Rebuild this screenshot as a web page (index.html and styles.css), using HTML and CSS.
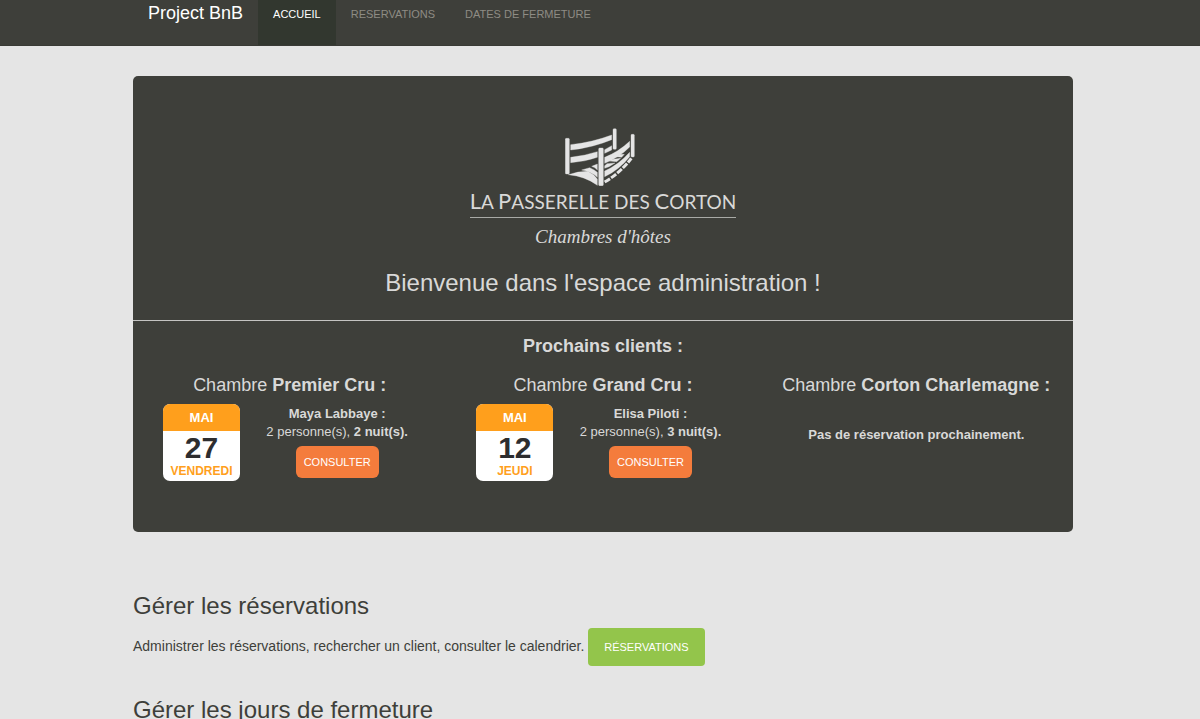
FILE: index.html
```html
<!DOCTYPE html>
<html lang="fr">
<head>
<meta charset="utf-8">
<title>Project BnB</title>
<link rel="stylesheet" href="styles.css">
</head>
<body>
<header class="navbar">
  <nav class="container nav">
    <a class="brand" href="#">Project BnB</a>
    <a class="nav-link active" href="#">ACCUEIL</a>
    <a class="nav-link" href="#">RESERVATIONS</a>
    <a class="nav-link" href="#">DATES DE FERMETURE</a>
  </nav>
</header>
<main class="container">
  <section class="hero">
    <div class="logo">
      <svg class="bridge" viewBox="30 18 228 174" aria-hidden="true">
        <rect x="31" y="49" width="12" height="107" rx="3"/>
        <rect x="174" y="20" width="10" height="62" rx="3"/>
        <rect x="228" y="37" width="10" height="68" rx="3"/>
        <rect x="131" y="78" width="14" height="113" rx="3"/>
        <path d="M47 68Q112 61 170 39V53Q112 77 47 84Z"/>
        <path d="M47 106Q90 101 127 89V106Q90 119 47 122Z"/>
        <path d="M149 83L170 71V84L149 94Z"/>
        <path d="M149 106Q190 90 224 58V75Q192 107 149 124Z"/>
        <path d="M149 147Q190 129 224 91V104Q192 144 149 164Z"/>
        <path d="M40 158Q68 148 98 148Q116 156 127 171V190Q92 163 40 158Z"/>
        <path d="M80 144L104 137Q118 143 127 151V166Q110 149 80 144Z"/>
        <path d="M110 133L127 126V144Q121 137 110 133Z"/>
        <path d="M149 131L156 125L180 123L162 134L149 139Z"/>
        <path d="M164 117L174 112L197 109L185 119Z"/>
        <path d="M184 104L196 97L208 97L200 106Z"/>
        <path class="edge" d="M149 180Q194 154 229 109"/>
      </svg>
      <p class="logo-name"><span class="cap">L</span>A <span class="cap">P</span>ASSERELLE DES <span class="cap">C</span>ORTON</p>
      <p class="logo-tag">Chambres d'hôtes</p>
    </div>
    <h1 class="welcome">Bienvenue dans l'espace administration !</h1>
    <h2 class="next">Prochains clients :</h2>
    <div class="rooms">
      <article class="room">
        <h3 class="room-name">Chambre <b>Premier Cru :</b></h3>
        <div class="booking">
          <time class="date" datetime="05-27"><span class="month">MAI</span><span class="day">27</span><span class="weekday">VENDREDI</span></time>
          <div class="guest">
            <p><b>Maya Labbaye :</b></p>
            <p>2 personne(s), <b>2 nuit(s).</b></p>
            <a class="btn btn-orange" href="#">CONSULTER</a>
          </div>
        </div>
      </article>
      <article class="room">
        <h3 class="room-name">Chambre <b>Grand Cru :</b></h3>
        <div class="booking">
          <time class="date" datetime="05-12"><span class="month">MAI</span><span class="day">12</span><span class="weekday">JEUDI</span></time>
          <div class="guest">
            <p><b>Elisa Piloti :</b></p>
            <p>2 personne(s), <b>3 nuit(s).</b></p>
            <a class="btn btn-orange" href="#">CONSULTER</a>
          </div>
        </div>
      </article>
      <article class="room">
        <h3 class="room-name">Chambre <b>Corton Charlemagne :</b></h3>
        <p class="empty"><b>Pas de réservation prochainement.</b></p>
      </article>
    </div>
  </section>
  <section class="manage">
    <h2 class="manage-title">Gérer les réservations</h2>
    <p class="manage-text">Administrer les réservations, rechercher un client, consulter le calendrier. <a class="btn btn-green" href="#">RÉSERVATIONS</a></p>
  </section>
  <section class="manage">
    <h2 class="manage-title">Gérer les jours de fermeture</h2>
  </section>
</main>
</body>
</html>
```
FILE: styles.css
```css
* { box-sizing: border-box; }
html { overflow-x: hidden; }
body {
  margin: 0;
  background: #e5e5e5;
  color: #3e3f3a;
  font: 14px/20px "Liberation Sans", Arial, sans-serif;
}
h1, h2, h3, p { margin: 0; font-weight: 400; }
a { text-decoration: none; }
.container {
  max-width: 946px;
  margin: 0 auto;
  padding-left: 6px;
}
.navbar {
  background: #3e3f3a;
  border-bottom: 1px solid #393a35;
}
.nav { display: flex; height: 45px; }
.brand {
  padding: 2px 15px;
  color: #fff;
  font-size: 18px;
  line-height: 22px;
}
.nav-link {
  padding: 4px 15px;
  color: #8e8c84;
  font-size: 11px;
}
.nav-link.active { background: #32372f; color: #fff; }

.hero {
  margin-top: 30px;
  padding: 52px 0 50px;
  border-radius: 5px;
  background: #3e3f3a;
  color: #d9d9d8;
  text-align: center;
}
.logo { display: flex; flex-direction: column; align-items: center; }
.bridge {
  width: 76px;
  height: 58px;
  fill: #e5e5e5;
  stroke: #e5e5e5;
  stroke-width: 1;
}
.bridge .edge {
  fill: none;
  stroke-width: 9;
  stroke-dasharray: 19 4;
}
.logo-name {
  padding-bottom: 1px;
  border-bottom: 1px solid #a9aaa6;
  font: 400 19px/29px Lato, sans-serif;
}
.cap { font-size: 22px; }
.logo-tag { font: italic 19px/38px "Liberation Serif", serif; }
.welcome {
  padding: 12px 0 22px;
  border-bottom: 1px solid #c4c4c2;
  font-size: 24px;
  line-height: 30px;
}
.next {
  padding: 15px 0 19px;
  font-size: 18px;
  font-weight: 700;
}
.rooms { display: grid; grid-template-columns: repeat(3, 1fr); }
.room { min-height: 107px; }
.room-name { padding-bottom: 9px; font-size: 18px; white-space: nowrap; }
.booking { display: flex; padding: 0 12px 0 30px; }
.date {
  width: 77px;
  height: 77px;
  display: flex;
  flex-direction: column;
  overflow: hidden;
  border-radius: 7px;
  background: #fff;
  color: #2d2d2f;
  font-weight: 700;
}
.month {
  background: #ff9f1c;
  color: #fff;
  font-size: 13px;
  line-height: 27px;
}
.day { font-size: 30px; line-height: 34px; }
.weekday { color: #ff9f1c; font-size: 12px; line-height: 12px; }
.guest { flex: 1; padding-top: 1px; font-size: 13px; line-height: 18px; }
.btn { display: inline-block; color: #fff; font-size: 11px; }
.btn-orange {
  margin-top: 5px;
  padding: 7px 8px;
  border-radius: 6px;
  background: #f47c3c;
}
.btn-green {
  padding: 9px 16px;
  border-radius: 4px;
  background: #93c54b;
}
.empty { padding-top: 21px; font-size: 13px; }
.manage { padding-bottom: 30px; }
.hero + .manage { padding-top: 60px; }
.manage-title { padding-bottom: 8px; font-size: 24px; line-height: 28px; }
```
